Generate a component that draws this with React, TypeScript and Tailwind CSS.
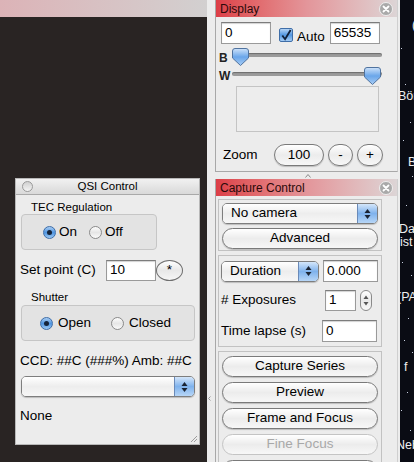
import React from "react";

const field =
  "flex items-center bg-white border border-[#9a9a9a] border-t-[#7c7c7c] shadow-[inset_0_1px_1px_rgba(0,0,0,0.18)] pl-[3px] text-[13.5px] text-black";

function Pill({
  children,
  className = "",
  disabled = false,
}: {
  children: React.ReactNode;
  className?: string;
  disabled?: boolean;
}) {
  return (
    <div
      className={`flex items-center justify-center rounded-full border bg-gradient-to-b from-white via-[#ececec] to-[#f7f7f7] text-[13.5px] ${
        disabled
          ? "border-[#c4c4c4] text-[#a8a8a8]"
          : "border-[#7a7a7a] text-black shadow-[0_1px_1px_rgba(0,0,0,0.2)]"
      } ${className}`}
    >
      {children}
    </div>
  );
}

function Arrows() {
  return (
    <svg width="7" height="12" viewBox="0 0 7 12">
      <path d="M3.5 1 L6.5 5 H0.5 Z" fill="#1b2433" />
      <path d="M3.5 11 L6.5 7 H0.5 Z" fill="#1b2433" />
    </svg>
  );
}

function Popup({ label, className = "" }: { label: string; className?: string }) {
  return (
    <div
      className={`flex rounded-[5px] border border-[#7e7e7e] overflow-hidden shadow-[0_1px_1px_rgba(0,0,0,0.2)] ${className}`}
    >
      <div className="flex-1 flex items-center pl-[8px] bg-gradient-to-b from-white via-[#ededed] to-[#f7f7f7] text-[13.5px] text-black">
        {label}
      </div>
      <div className="w-[20px] flex items-center justify-center border-l border-[#6a8ab8] bg-gradient-to-b from-[#d4e6fa] via-[#7fb2ec] to-[#b7d6f7]">
        <Arrows />
      </div>
    </div>
  );
}

function Radio({ on }: { on: boolean }) {
  return on ? (
    <div className="w-[13px] h-[13px] rounded-full border border-[#3f6ea8] bg-gradient-to-b from-[#a9cdf3] via-[#4f95e0] to-[#9cc9f4] flex items-center justify-center">
      <div className="w-[5px] h-[5px] rounded-full bg-[#16243a]" />
    </div>
  ) : (
    <div className="w-[13px] h-[13px] rounded-full border border-[#8a8a8a] bg-gradient-to-b from-[#fdfdfd] via-[#e6e6e6] to-[#fafafa]" />
  );
}

function Thumb() {
  return (
    <svg width="17" height="18" viewBox="0 0 17 18">
      <defs>
        <linearGradient id="tg" x1="0" y1="0" x2="0" y2="1">
          <stop offset="0" stopColor="#cfe3fa" />
          <stop offset="0.5" stopColor="#6aa6ea" />
          <stop offset="1" stopColor="#a8cdf5" />
        </linearGradient>
      </defs>
      <path
        d="M3 0.5 H14 Q16.5 0.5 16.5 3 V10 L8.5 17.5 L0.5 10 V3 Q0.5 0.5 3 0.5 Z"
        fill="url(#tg)"
        stroke="#50739f"
      />
    </svg>
  );
}

function CloseDot() {
  return (
    <svg width="14" height="14" viewBox="0 0 14 14">
      <circle cx="7" cy="7" r="6.5" fill="#a9a9a9" stroke="#eeeeee" />
      <path d="M4.5 4.5 L9.5 9.5 M9.5 4.5 L4.5 9.5" stroke="white" strokeWidth="1.8" strokeLinecap="round" />
    </svg>
  );
}

function Header({ title }: { title: string }) {
  return (
    <div className="h-[17px] shrink-0 flex items-center justify-between pl-[4px] pr-[4px] bg-gradient-to-r from-[#dc3e47] via-[#e3959a] to-[#dcd5d6] text-[12px] text-[#2a0a0a]">
      <span>{title}</span>
      <CloseDot />
    </div>
  );
}

function QsiWindow() {
  return (
    <div className="relative w-[185px] h-[267px] bg-[#ececec] border border-[#b8b8b8] flex flex-col">
      <div className="h-[16px] flex items-center bg-gradient-to-b from-[#f1f1f1] to-[#d9d9d9] border-b border-[#a9a9a9] relative">
        <div className="ml-[6px] w-[11px] h-[11px] rounded-full border border-[#9a9a9a] bg-gradient-to-b from-[#d0d0d0] to-[#f4f4f4]" />
        <span className="flex-1 text-center text-[11.5px] text-black pr-[17px]">QSI Control</span>
      </div>

      <div className="mt-[5px] pl-[15px] h-[14px] leading-[14px] text-[11.5px] text-black">TEC Regulation</div>
      <div className="mt-[0px] ml-[5px] w-[136px] h-[36px] rounded-[4px] border border-[#c6c6c6] bg-[#e3e3e3] flex items-center pl-[21px] text-[13.5px]">
        <Radio on />
        <span className="ml-[3px]">On</span>
        <div className="ml-[12px]">
          <Radio on={false} />
        </div>
        <span className="ml-[3px]">Off</span>
      </div>

      <div className="mt-[9px] pl-[4px] flex items-center h-[23px] text-[13.5px]">
        <span className="w-[86px]">Set point (C)</span>
        <div className={`${field} w-[50px] h-[21px]`}>10</div>
        <div className="ml-[0px] w-[27px] h-[21px] rounded-[50%] border border-[#6e6e6e] bg-gradient-to-b from-white via-[#e8e8e8] to-[#f6f6f6] flex items-center justify-center text-[13.5px]">
          *
        </div>
      </div>

      <div className="mt-[8px] pl-[15px] h-[14px] leading-[14px] text-[11.5px] text-black">Shutter</div>
      <div className="mt-[1px] ml-[5px] w-[174px] h-[36px] rounded-[4px] border border-[#c6c6c6] bg-[#e3e3e3] flex items-center pl-[18px] text-[13.5px]">
        <Radio on />
        <span className="ml-[5px]">Open</span>
        <div className="ml-[20px]">
          <Radio on={false} />
        </div>
        <span className="ml-[5px]">Closed</span>
      </div>

      <div className="mt-[12px] pl-[4px] h-[16px] leading-[16px] text-[13.5px] whitespace-nowrap">
        CCD: ##C (###%) Amb: ##C
      </div>
      <Popup label="" className="mt-[7px] ml-[5px] w-[174px] h-[21px]" />
      <div className="mt-[11px] pl-[4px] h-[16px] leading-[16px] text-[13.5px]">None</div>

      <svg className="absolute right-[1px] bottom-[1px]" width="9" height="9" viewBox="0 0 9 9">
        <path d="M8 2 L2 8 M8 5 L5 8" stroke="#9d9d9d" strokeWidth="1" />
      </svg>
    </div>
  );
}

function DisplayPanel() {
  return (
    <div className="w-[183px] shrink-0 border-l border-r border-b border-[#a8a8a8] border-r-[#cfcfcf] flex flex-col pb-[5px]">
      <Header title="Display" />
      <div className="mt-[5px] pl-[5px] flex items-start h-[22px]">
        <div className={`${field} w-[50px] h-[22px]`}>0</div>
        <div className="ml-[8px] mt-[6px] w-[14px] h-[14px] rounded-[2px] border border-[#3f6ea8] bg-gradient-to-b from-[#b3d3f5] via-[#5297e1] to-[#a3cbf4] flex items-center justify-center">
          <svg width="13" height="13" viewBox="0 0 13 13">
            <path d="M2.5 6.5 L5.5 10.5 L11.5 0.5" fill="none" stroke="#10203a" strokeWidth="2" />
          </svg>
        </div>
        <span className="ml-[4px] mt-[7px] text-[13.5px] leading-[16px]">Auto</span>
        <div className={`${field} ml-[5px] w-[50px] h-[22px]`}>65535</div>
      </div>

      <div className="mt-[4px] h-[18px] flex items-start pl-[3px]">
        <span className="w-[13px] text-[12px] font-bold text-[#222] leading-[18px] mt-[1px]">B</span>
        <div className="relative w-[150px] h-[18px]">
          <div className="mt-[5px] h-[4px] rounded-full bg-[#9b9b9b] shadow-[inset_0_1px_1px_rgba(0,0,0,0.3)]" />
          <div className="absolute left-0 top-0">
            <Thumb />
          </div>
        </div>
      </div>
      <div className="h-[18px] flex items-start pl-[3px]">
        <span className="w-[13px] text-[12px] font-bold text-[#222] leading-[18px] mt-[1px]">W</span>
        <div className="relative w-[150px] h-[18px]">
          <div className="mt-[6px] h-[4px] rounded-full bg-[#9b9b9b] shadow-[inset_0_1px_1px_rgba(0,0,0,0.3)]" />
          <div className="absolute right-[1px] top-[1px]">
            <Thumb />
          </div>
        </div>
      </div>

      <div className="mt-[2px] ml-[20px] w-[143px] h-[46px] border border-[#c4c4c4] bg-[#ededed]" />

      <div className="mt-[12px] pl-[7px] flex items-center h-[22px]">
        <span className="w-[51px] text-[13.5px]">Zoom</span>
        <Pill className="w-[50px] h-[22px]">100</Pill>
        <Pill className="ml-[4px] w-[25px] h-[22px]">-</Pill>
        <Pill className="ml-[4px] w-[26px] h-[22px]">+</Pill>
      </div>
    </div>
  );
}

function CapturePanel() {
  return (
    <div className="w-[183px] flex-1 border-l border-r border-[#a8a8a8] border-r-[#cfcfcf] flex flex-col">
      <Header title="Capture Control" />
      <div className="mt-[3px] ml-[2px] w-[164px] h-[52px] shrink-0 border border-[#c2c2c2] flex flex-col px-[3px]">
        <Popup label="No camera" className="mt-[3px] h-[21px] shrink-0" />
        <Pill className="mt-[4px] h-[21px] shrink-0">Advanced</Pill>
      </div>

      <div className="mt-[4px] ml-[2px] w-[164px] h-[92px] shrink-0 border border-[#c2c2c2] flex flex-col pl-[2px]">
        <div className="mt-[4px] flex items-center">
          <Popup label="Duration" className="w-[98px] h-[21px]" />
          <div className={`${field} ml-[4px] w-[55px] h-[22px]`}>0.000</div>
        </div>
        <div className="mt-[8px] flex items-center h-[21px]">
          <span className="w-[104px] text-[13.5px]"># Exposures</span>
          <div className={`${field} w-[31px] h-[21px]`}>1</div>
          <div className="ml-[4px] w-[12px] h-[21px] rounded-full border border-[#8a8a8a] bg-gradient-to-b from-white via-[#e9e9e9] to-[#f8f8f8] flex items-center justify-center">
            <svg width="6" height="13" viewBox="0 0 6 13">
              <path d="M3 1.5 L5.5 5 H0.5 Z" fill="#555" />
              <path d="M3 11.5 L5.5 8 H0.5 Z" fill="#555" />
            </svg>
          </div>
        </div>
        <div className="mt-[9px] flex items-center h-[22px]">
          <span className="w-[101px] text-[13.5px]">Time lapse (s)</span>
          <div className={`${field} w-[55px] h-[22px]`}>0</div>
        </div>
      </div>

      <div className="mt-[4px] ml-[2px] w-[164px] flex-1 border-l border-r border-t border-[#c2c2c2] flex flex-col px-[3px] pt-[4px] gap-[5px]">
        <Pill className="h-[21px] shrink-0">Capture Series</Pill>
        <Pill className="h-[21px] shrink-0">Preview</Pill>
        <Pill className="h-[21px] shrink-0">Frame and Focus</Pill>
        <Pill className="h-[21px] shrink-0" disabled>
          Fine Focus
        </Pill>
        <Pill className="h-[21px] shrink-0">&nbsp;</Pill>
      </div>
    </div>
  );
}

const stars = [
  [1, 48], [5, 84], [10, 122], [3, 140], [12, 176], [6, 205], [2, 262],
  [11, 275], [8, 318], [4, 340], [12, 352], [7, 392], [1, 410], [10, 430],
];

const labels: [number, number, string][] = [
  [12, 19, "("],
  [-2, 90, "Börd"],
  [8, 156, "B"],
  [-1, 223, "Dar"],
  [0, 236, "ist"],
  [-3, 291, "(PA"],
  [4, 361, "f"],
  [-4, 439, "Neb"],
];

export default function App() {
  return (
    <div className="w-[414px] h-[462px] flex overflow-hidden font-['Liberation_Sans',Arial,sans-serif] text-black">
      <div className="w-[207px] flex flex-col">
        <div className="h-[17px] bg-gradient-to-r from-[#dcb3b7] to-[#d2d0d0]" />
        <div className="flex-1 bg-[#292423] pt-[161px] pl-[15px]">
          <QsiWindow />
        </div>
      </div>

      <div className="relative w-[193px] bg-[#ececec] pl-[8px] flex flex-col">
        <DisplayPanel />
        <div className="h-[7px] shrink-0 flex justify-center items-center">
          <svg width="6" height="4" viewBox="0 0 6 4">
            <path d="M0.5 3.5 L3 0.5 L5.5 3.5" fill="none" stroke="#8a8a8a" />
          </svg>
        </div>
        <CapturePanel />
        <svg className="absolute left-[1px] top-[396px]" width="3" height="5" viewBox="0 0 3 5">
          <path d="M2.5 0.5 L0.5 2.5 L2.5 4.5" fill="none" stroke="#9a9a9a" />
        </svg>
      </div>

      <div className="relative flex-1 bg-[#0a0c14] overflow-hidden">
        {stars.map(([x, y], i) => (
          <div
            key={i}
            className="absolute w-[1px] h-[1px] bg-[#c8d0e0]"
            style={{ left: x, top: y }}
          />
        ))}
        {labels.map(([x, y, t], i) => (
          <span
            key={i}
            className="absolute text-[12.5px] leading-[12px] text-[#eeeeee] whitespace-nowrap"
            style={{ left: x, top: y }}
          >
            {t}
          </span>
        ))}
      </div>
    </div>
  );
}
